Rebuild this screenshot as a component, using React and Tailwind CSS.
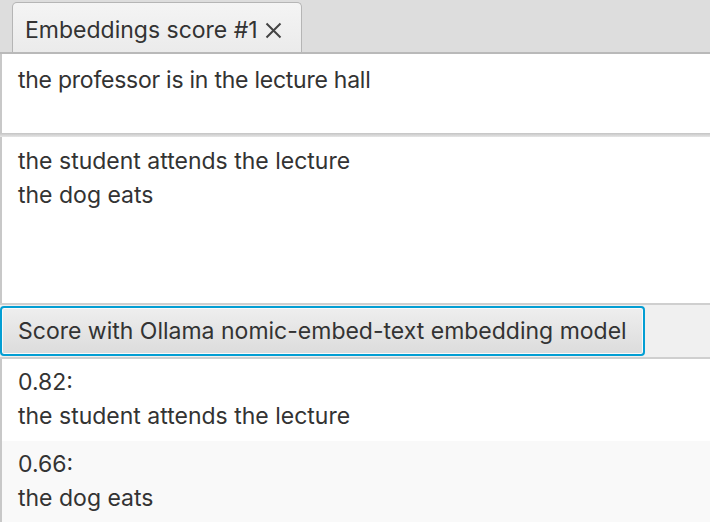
import React from 'react';

const font = { fontFamily: 'Inter, "Noto Sans", sans-serif' };

export default function App() {
    return (
        <div className="w-[710px] h-[526px] overflow-hidden bg-white text-[#333333] text-[23px] leading-[34px]" style={font}>
            {/* tab header */}
            <div className="h-[54px] bg-[#dddddd] flex items-end pl-[12px] border-b-2 border-[#b9b9b9]">
                <div className="h-[50px] w-[290px] rounded-t-[5px] border border-b-0 border-[#b5b5b5] bg-gradient-to-b from-[#f4f4f4] to-[#ebebeb] flex items-center pl-[12px] gap-[7px] pt-[4px]">
                    <span>Embeddings score #1</span>
                    <svg width="17" height="17" viewBox="0 0 17 17" className="mt-[1px]">
                        <path d="M1.5 1.5 L15.5 15.5 M15.5 1.5 L1.5 15.5" stroke="#444" strokeWidth="2" fill="none" />
                    </svg>
                </div>
            </div>

            {/* query field */}
            <div className="h-[79px] border-l-2 border-[#c8c8c8] bg-white px-[16px] pt-[9px] tracking-[-0.25px]">
                the professor is in the lecture hall
            </div>
            <div className="h-[4px] bg-gradient-to-b from-[#c4c4c4] to-[#e6e6e6]" />

            {/* candidates area */}
            <div className="h-[166px] border-l-2 border-[#c8c8c8] bg-white px-[16px] pt-[7px]">
                <div>the student attends the lecture</div>
                <div>the dog eats</div>
            </div>
            <div className="h-[2px] bg-[#cfcfcf]" />

            {/* button bar */}
            <div className="h-[52px] bg-[#f0f0f0] flex items-center">
                <button className="h-[50px] w-[645px] rounded-[4px] border-2 border-[#039ed3] bg-gradient-to-b from-[#eeeeee] to-[#dcdcdc] text-left pl-[16px] shadow-[inset_0_0_0_1px_#fafafa]">
                    Score with Ollama nomic-embed-text embedding model
                </button>
            </div>
            <div className="h-[2px] bg-[#cfcfcf]" />

            {/* results */}
            <div className="border-l-2 border-[#c8c8c8]">
                <div className="h-[82px] bg-white px-[16px] pt-[6px]">
                    <div>0.82:</div>
                    <div>the student attends the lecture</div>
                </div>
                <div className="h-[81px] bg-[#f9f9f9] px-[16px] pt-[6px]">
                    <div>0.66:</div>
                    <div>the dog eats</div>
                </div>
            </div>
        </div>
    );
}
